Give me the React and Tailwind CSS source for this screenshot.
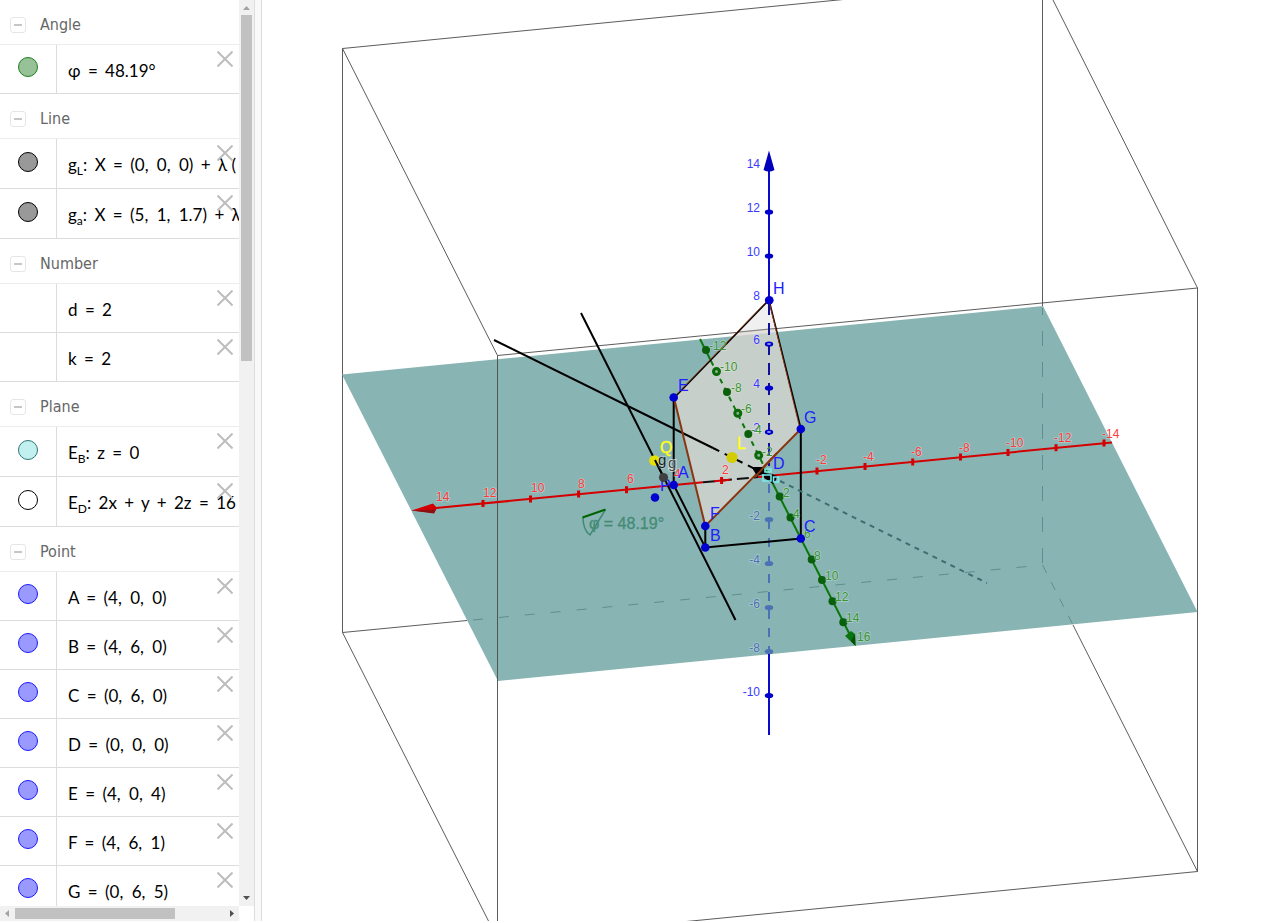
const groups = [
  {
    title: 'Angle',
    items: [{ name: 'φ', value: '48.19°', fill: 'bg-[#97c197]', ring: 'border-[#1c7f1c]' }],
  },
  {
    title: 'Line',
    items: [
      { name: 'g', sub: 'L', value: 'X = (0, 0, 0) + λ (', fill: 'bg-[#999999]', ring: 'border-black' },
      { name: 'g', sub: 'a', value: 'X = (5, 1, 1.7) + λ', fill: 'bg-[#999999]', ring: 'border-black' },
    ],
  },
  {
    title: 'Number',
    items: [
      { name: 'd', value: '2' },
      { name: 'k', value: '2' },
    ],
  },
  {
    title: 'Plane',
    items: [
      { name: 'E', sub: 'B', value: 'z = 0', fill: 'bg-[#c2f0f0]', ring: 'border-[#2f7575]' },
      { name: 'E', sub: 'D', value: '2x + y + 2z = 16', fill: 'bg-white', ring: 'border-black' },
    ],
  },
  {
    title: 'Point',
    items: [
      ['A', '(4, 0, 0)'],
      ['B', '(4, 6, 0)'],
      ['C', '(0, 6, 0)'],
      ['D', '(0, 0, 0)'],
      ['E', '(4, 0, 4)'],
      ['F', '(4, 6, 1)'],
      ['G', '(0, 6, 5)'],
    ].map(([name, value]) => ({ name, value, fill: 'bg-[#9999ff]', ring: 'border-[#1a1aff]' })),
  },
];

const spacing = {
  '=': 'mx-[3px]',
  '+': 'mx-[3px]',
  ',': 'mr-1',
};

// operators and commas get a bit of extra room, like typeset maths
const Formula = ({ text }) =>
  text.split(/([=+,])/).map((part, i) => (
    <span key={i} className={spacing[part]}>{part}</span>
  ));

const Row = ({ item }) => (
  <li className={`relative flex border-b border-[#dcdcdc] ${item.sub ? 'h-[50px]' : 'h-[49px]'}`}>
    <div className={`flex w-[57px] shrink-0 justify-center border-r border-[#dcdcdc] ${item.sub ? 'pt-[13px]' : 'pt-3'}`}>
      {item.fill && (
        <button
          type="button"
          aria-label={`Show or hide ${item.name}${item.sub ?? ''}`}
          className={`size-5 rounded-full border ${item.fill} ${item.ring}`}
        />
      )}
    </div>
    <div className="overflow-hidden whitespace-nowrap pt-[13px] pl-[11px] font-['Lato','Noto_Sans',sans-serif] text-[17px] leading-[26px] text-black">
      {item.name}
      {item.sub && <span className="relative top-1 text-xs">{item.sub}</span>}
      {item.sub && <span className="mr-[3px]">: </span>}
      {!item.sub && ' '}
      <Formula text={item.sub ? item.value : `= ${item.value}`} />
    </div>
    <button type="button" aria-label="Delete" className="absolute top-1.5 right-1.5 size-4 text-[#bdbdbd]">
      <svg viewBox="0 0 16 16" className="size-4" fill="none" stroke="currentColor" strokeWidth="2">
        <path d="M0.5 0.5l15 15M15.5 0.5l-15 15" />
      </svg>
    </button>
  </li>
);

const Group = ({ group }) => (
  <section>
    <div className="flex h-[45px] items-center gap-3.5 border-b border-[#ececec] pl-2.5">
      <button
        type="button"
        aria-label={`Collapse ${group.title}`}
        className="mt-1.5 flex size-4 items-center justify-center rounded-[3px] border border-[#e6e6e6]"
      >
        <span className="h-0.5 w-2 bg-[#c6c6c6]" />
      </button>
      <h2 className="pt-1.5 font-['DejaVu_Sans_Condensed','DejaVu_Sans',sans-serif] text-base text-[#666666]">
        {group.title}
      </h2>
    </div>
    <ul>
      {group.items.map((item) => (
        <Row key={item.name + (item.sub ?? '')} item={item} />
      ))}
    </ul>
  </section>
);

const AlgebraView = () => (
  <aside className="grid w-[254px] shrink-0 grid-cols-[1fr_15px] grid-rows-[1fr_15px] bg-white">
    <div className="min-h-0 min-w-0 overflow-hidden">
      {groups.map((g) => (
        <Group key={g.title} group={g} />
      ))}
    </div>
    <div className="flex flex-col items-center justify-between bg-[#f1f1f1]">
      <div className="flex h-[361px] w-full flex-col items-center">
        <svg viewBox="0 0 15 15" className="size-[15px] shrink-0 fill-[#a3a3a3]"><path d="M4 10l3.500-4 3.500 4z" /></svg>
        <div className="w-[11px] grow bg-[#c1c1c1]" />
      </div>
      <svg viewBox="0 0 15 15" className="size-[15px] fill-[#505050]"><path d="M4 5h7l-3.500 4z" /></svg>
    </div>
    <div className="flex items-center justify-between bg-[#f1f1f1]">
      <div className="flex h-full w-[175px] items-center">
        <svg viewBox="0 0 15 15" className="size-[15px] shrink-0 fill-[#a3a3a3]"><path d="M9 4v7l-4-3.500z" /></svg>
        <div className="h-[11px] grow bg-[#c1c1c1]" />
      </div>
      <svg viewBox="0 0 15 15" className="size-[15px] fill-[#505050]"><path d="M6 4v7l4-3.500z" /></svg>
    </div>
    <div className="bg-white" />
  </aside>
);

const xTicks = [
  [1104, 443], [1056, 447.7], [1008, 452.5], [960.5, 457], [912.7, 462],
  [865, 466.5], [817, 471], [721.6, 480.5], [674, 485], [626.5, 489.7],
  [578.6, 494], [530.5, 499], [483, 503.5],
];

const xLabels = [
  [1102, 438, '-14'], [1054, 442, '-12'], [1006, 447, '-10'], [959, 452, '-8'], [911, 456, '-6'],
  [863, 461, '-4'], [816, 464, '-2'], [722, 474, '2'], [674, 478, '4'], [627, 483, '6'], [578, 488, '8'],
  [531, 492, '10'], [483, 497, '12'], [436, 501, '14'],
];

const yTicks = [
  [706, 350], [716.5, 371.5], [727, 392], [737.8, 413.3], [748.3, 434], [758.7, 455.3],
  [779.7, 496.5], [790.5, 517.5], [811.7, 559.5], [822, 580], [832.5, 601.3], [843.3, 622.3],
];

const yLabels = [
  [709, 350, '-12'], [720, 371, '-10'], [731, 392, '-8'], [741, 413, '-6'], [751, 434, '-4'], [762, 456, '-2'],
  [783, 497, '2'], [793, 518, '4'], [804, 538, '6'], [814, 560, '8'], [825, 580, '10'], [835, 601, '12'],
  [846, 622, '14'], [857, 641, '16'],
];

const zTicks = [
  [212, '12'], [256, '10'], [300, '8'], [344, '6'], [388, '4'], [432, '2'],
  [519.5, '-2'], [563.5, '-4'], [607.5, '-6'], [651.5, '-8'], [695.5, '-10'],
];

const points = [
  [769.3, 300.3], [673.7, 397.5], [800.8, 429], [673.7, 485], [705.3, 526], [705.3, 547.5], [800.8, 538.5], [655, 497.5],
];

const isBelowPlane = (y) => y > 500 && y < 655;

const Graphics3D = () => (
  <svg
    viewBox="262 0 1018 921"
    preserveAspectRatio="xMinYMin slice"
    className="h-full w-full font-['Liberation_Sans',sans-serif]"
    role="img"
    aria-label="3D view"
  >
    <g fill="none" stroke="#4a4a4a" strokeWidth="0.9">
      <path d="M342.5 632.5V48.5L1042.5-20" />
      <path d="M1051-4L1197.5 288V871.5L620 928" />
      <path d="M1042.5 0V308" />
      <path d="M342.5 48.5L497.5 355.5" />
      <path d="M342.5 632.5L488.500 921" />
    </g>
    <path d="M342 374.5L1043 306L1197.5 612L498 681Z" fill="#89b4b4" />
    <g fill="none" stroke="#4a4a4a" strokeWidth="0.9">
      <path d="M497.5 921V355.5L1197.5 288" />
      <path d="M342.5 632.5L467 620.5" />
      <path d="M1073 625L1197.5 871.5" />
    </g>
    <g fill="none" stroke="#5f8e8e" strokeWidth="1">
      <path d="M473 620L1042.5 565" strokeDasharray="10 16" />
      <path d="M1042.5 308V565" strokeDasharray="15 16" strokeDashoffset="8" />
      <path d="M1042.5 565L1073 625" strokeDasharray="9 10" />
    </g>

    {/* cut plane EFGH */}
    <path d="M769 300L674 398L705.5 526L801 429Z" fill="#dcd8d2" fillOpacity="0.75" />
    <path d="M769 300L738.5 332L776.5 328Z" fill="#f0f0f0" />
    <path d="M738.5 332L776.5 328.3" stroke="#777777" strokeWidth="0.9" />

    {/* z axis */}
    <g stroke="#0a0acc" strokeWidth="2" fill="none">
      <path d="M769 165V300M769 652V735" />
      <path d="M769 303V466" stroke="#10109c" strokeDasharray="12 8" />
      <path d="M769 484V652" stroke="#4a72b4" strokeDasharray="9 9" />
    </g>
    <path d="M769 150.5L774.500 170Q769 173 763.500 170Z" fill="#0000bb" />

    {/* y axis */}
    <g stroke="#0a780a" strokeWidth="2" fill="none">
      <path d="M700 339L711 361" />
      <path d="M711 361L769 476" strokeDasharray="5 5" />
      <path d="M769 476L850 635" />
    </g>
    {yTicks.map(([x, y], i) => (
      <circle
        key={x}
        cx={x}
        cy={y}
        r={i % 2 && i < 6 ? 3 : 4}
        fill={i % 2 && i < 6 ? '#89b489' : '#0a5f0a'}
        stroke="#0a6a0a"
        strokeWidth={i % 2 && i < 6 ? 3 : 0}
      />
    ))}
    <path d="M845 636L851 631L855 634L855.500 646Z" fill="#0a7410" />
    <path d="M851 641L855 634L855.500 646Z" fill="#065006" />

    {/* x axis */}
    <g stroke="#d40000" strokeWidth="2" fill="none">
      <path d="M436 508L703 482.3M758 477L1112 442.5" />
      <path d="M703 482.3L758 477" stroke="#111111" strokeDasharray="12 5" />
      <path d="M714 481.3L730 479.7" />
      {xTicks.map(([x, y]) => (
        <path key={x} d={`M${x} ${y - 3.5}v7`} strokeWidth="3" />
      ))}
    </g>
    <path d="M411.500 510.5L433 503.5L437 508L434 513Z" fill="#d40000" />
    <path d="M411.500 510.5L436 509.5L434 513.5Z" fill="#8c1010" />

    {/* lines and edges */}
    <g stroke="#000000" strokeWidth="2" fill="none">
      <path d="M494 340L713 448" />
      <path d="M713 448L769 476" strokeDasharray="7 6" />
      <path d="M581 313L735.5 620" />
      <path d="M673.7 398V485L705.3 547.5L800.8 538.5V429M705.3 526V547.5" />
      <path d="M674 398L769 300L801 429" strokeWidth="1.600" />
      <path d="M780 481L987 583" stroke="#3c6f6f" strokeDasharray="5 5" />
    </g>
    <path d="M674 398L705.3 526L800.8 429" fill="none" stroke="#8b3510" strokeWidth="2" />
    <path d="M674 397L769 299M769 301L800 429" stroke="#8b3510" strokeWidth="0.9" />

    <g fontSize="12" stroke="#ffffff" strokeOpacity="0.3" strokeWidth="1.500" style={{ paintOrder: 'stroke' }}>
      <g textAnchor="end">
        <text x="760" y="168" fill="#3a3aff">14</text>
        {zTicks.map(([y, label]) => (
          <text key={label} x="760" y={y} fill={isBelowPlane(y) ? '#4870b8' : '#3a3aff'}>{label}</text>
        ))}
      </g>
      <g fill="#ff3a3a">
        {xLabels.map(([x, y, label]) => (
          <text key={label} x={x} y={y}>{label}</text>
        ))}
      </g>
      <g fill="#3a9630">
        {yLabels.map(([x, y, label]) => (
          <text key={label} x={x} y={y}>{label}</text>
        ))}
      </g>
    </g>
    {zTicks.map(([y]) => (
      <ellipse key={y} cx="769" cy={y} rx="4.200" ry="2.600" fill={isBelowPlane(y) ? '#4a72b4' : '#0000cc'} />
    ))}
    <g fill="#8a98e0">
      <ellipse cx="769" cy="344" rx="2" ry="0.9" />
      <ellipse cx="769" cy="432" rx="2" ry="0.9" />
    </g>

    {/* angle */}
    <path d="M583 517.5Q583 530 590 535L605.5 509.5" fill="none" stroke="#3f8a72" strokeWidth="1.500" />
    <path d="M582.5 517.5L605.5 509.5" stroke="#006400" strokeWidth="2" />
    <text x="589" y="529" fontSize="16" fill="#448b74" stroke="#448b74" strokeWidth="0.3">φ = 48.19°</text>

    <text x="660" y="491" fontSize="16" fill="#2020ff">P</text>
    {points.map(([x, y]) => (
      <circle key={`${x}-${y}`} cx={x} cy={y} r="4.300" fill="#0000d0" />
    ))}
    <circle cx="654.500" cy="460.5" r="5.300" fill="#e6e000" />
    <path d="M655 460L664 478" stroke="#000000" strokeWidth="2" />
    <circle cx="663.500" cy="477.5" r="4.600" fill="#404040" />
    <circle cx="732" cy="457.5" r="5.500" fill="#d2cc00" />

    {/* origin */}
    <path d="M751.500 467H764L766 473L757 476Z" />
    <path d="M765 473l7 1 5 2-1 4-3 4-4-3-5-3z" />
    <path d="M755 477L777 453" stroke="#8b3510" strokeWidth="2" />
    <g fill="none" stroke="#78ecec" strokeWidth="1.600">
      <path d="M763 475h8v6h-8z" />
      <path d="M773.500 477h5v5h-5z" />
      <path d="M765 472v-3h6v3z" />
    </g>

    <g fontSize="16" fill="#2020ff">
      <text x="773" y="294">H</text>
      <text x="678" y="391">E</text>
      <text x="804" y="423">G</text>
      <text x="678" y="478">A</text>
      <text x="773" y="469">D</text>
      <text x="804" y="532">C</text>
      <text x="710" y="519">F</text>
      <text x="710" y="541">B</text>
    </g>
    <g fontSize="16" fill="#ffff20" stroke="#ffff20" strokeWidth="0.4">
      <text x="660" y="453">Q</text>
      <text x="737" y="449">L</text>
    </g>
    <g stroke="#ffffff" strokeOpacity="0.6" strokeWidth="2" style={{ paintOrder: 'stroke' }}>
      <text x="658" y="465" fontSize="15" fill="#222222" strokeOpacity="0.25">g</text>
      <text x="668" y="468" fontSize="15" fill="#444444">g</text>
    </g>
  </svg>
);

const App = () => (
  <div className="flex h-screen bg-white pb-0.5">
    <AlgebraView />
    <div className="w-2 shrink-0 border-x border-[#dddddd] bg-[#f9f9f9]" />
    <main className="min-w-0 flex-1 overflow-hidden">
      <Graphics3D />
    </main>
  </div>
);

export default App;
